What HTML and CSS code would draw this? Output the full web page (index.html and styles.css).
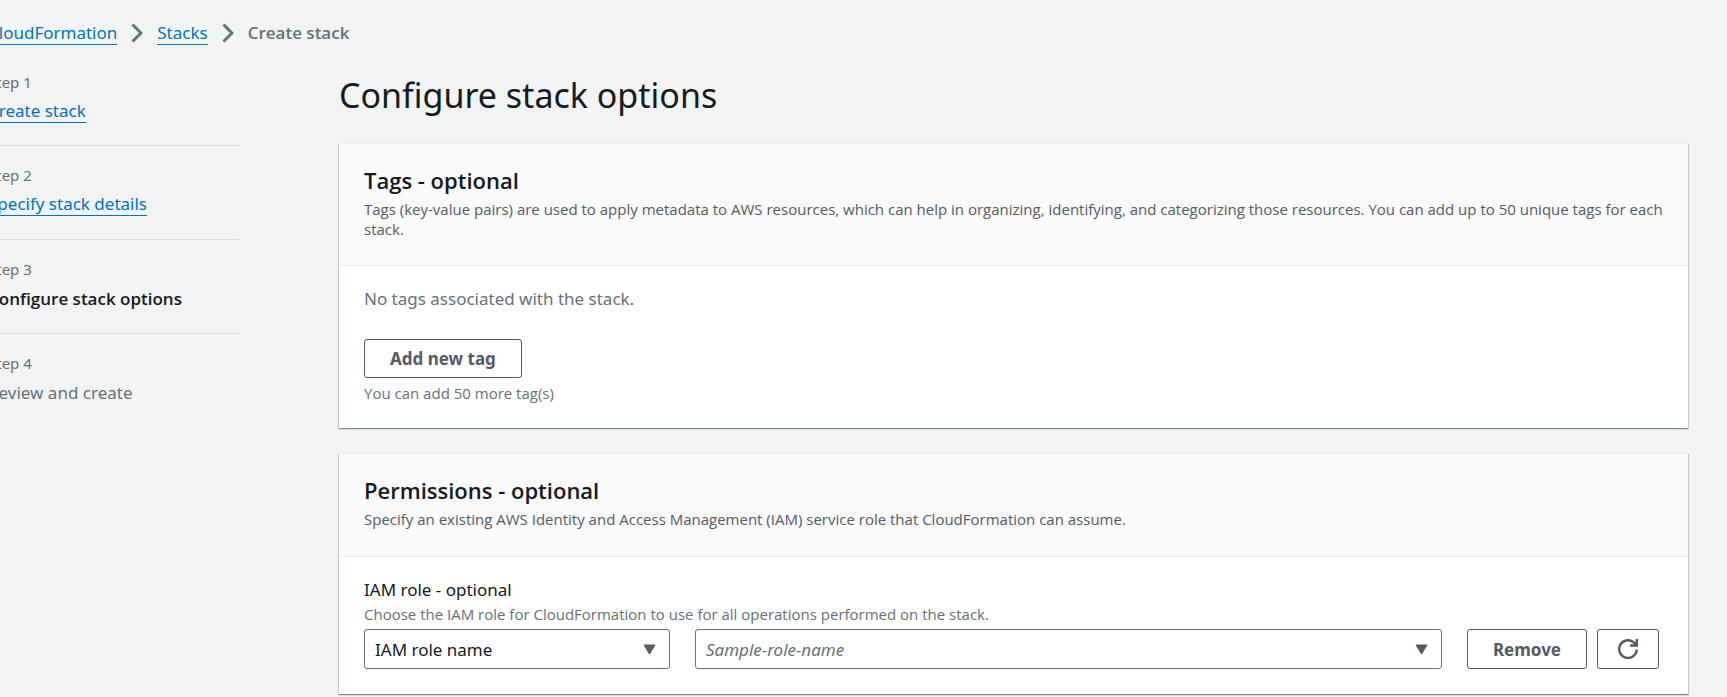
FILE: index.html
```html
<!DOCTYPE html>
<html lang="en">
<head>
<meta charset="utf-8">
<meta name="viewport" content="width=device-width, initial-scale=1">
<title>Create stack</title>
<link rel="stylesheet" href="styles.css">
</head>
<body>
<div class="page">
  <nav class="breadcrumbs" aria-label="Breadcrumbs">
    <a class="link" href="#cloudformation">CloudFormation</a>
    <svg class="chevron" viewBox="0 0 12 20" aria-hidden="true"><path d="M1.5 1.5 10 10l-8.5 8.5"/></svg>
    <a class="link" href="#stacks">Stacks</a>
    <svg class="chevron" viewBox="0 0 12 20" aria-hidden="true"><path d="M1.5 1.5 10 10l-8.5 8.5"/></svg>
    <span class="current">Create stack</span>
  </nav>
  <div class="layout">
    <ol class="steps">
      <li class="step"><span class="step-label">Step 1</span><a class="link" href="#create">Create stack</a></li>
      <li class="step"><span class="step-label">Step 2</span><a class="link" href="#details">Specify stack details</a></li>
      <li class="step"><span class="step-label">Step 3</span><span class="step-active" aria-current="step">Configure stack options</span></li>
      <li class="step"><span class="step-label">Step 4</span><span class="step-next">Review and create</span></li>
    </ol>
    <main class="content">
      <h1 class="title">Configure stack options</h1>
      <section class="card">
        <header class="card-header">
          <h2 class="card-title">Tags - optional</h2>
          <p class="card-text">Tags (key-value pairs) are used to apply metadata to AWS resources, which can help in organizing, identifying, and categorizing those resources. You can add up to 50 unique tags for each stack.</p>
        </header>
        <div class="card-body">
          <p class="empty">No tags associated with the stack.</p>
          <button class="button" type="button">Add new tag</button>
          <p class="hint">You can add 50 more tag(s)</p>
        </div>
      </section>
      <section class="card">
        <header class="card-header">
          <h2 class="card-title">Permissions - optional</h2>
          <p class="card-text">Specify an existing AWS Identity and Access Management (IAM) service role that CloudFormation can assume.</p>
        </header>
        <div class="card-body">
          <label class="field-label" for="role-kind">IAM role - optional</label>
          <p class="field-hint" id="role-hint">Choose the IAM role for CloudFormation to use for all operations performed on the stack.</p>
          <div class="role-row">
            <div class="select-wrap kind">
              <select class="select" id="role-kind" aria-describedby="role-hint"><option>IAM role name</option></select>
              <svg class="caret" viewBox="0 0 13 11" aria-hidden="true"><path d="M1 1h11L6.5 10z"/></svg>
            </div>
            <div class="select-wrap name">
              <select class="select placeholder" aria-label="Role name"><option>Sample-role-name</option></select>
              <svg class="caret" viewBox="0 0 13 11" aria-hidden="true"><path d="M1 1h11L6.5 10z"/></svg>
            </div>
            <div class="actions">
              <button class="button" type="button">Remove</button>
              <button class="button icon-button" type="button" aria-label="Refresh">
                <svg class="refresh" viewBox="0 0 20 20" aria-hidden="true"><path d="M18.8 10.5A8.8 8.8 0 1 1 15.5 3.2L18.5 6M18.8 0v6.5h-6.800"/></svg>
              </button>
            </div>
          </div>
        </div>
      </section>
    </main>
  </div>
</div>
</body>
</html>
```
FILE: styles.css
```css
* { box-sizing: border-box; }
body {
  margin: 0;
  background: #f2f3f3;
  color: #16191f;
  font: 17px/25px "Noto Sans", "Open Sans", sans-serif;
  overflow-x: hidden;
}
h1, h2, p, ol { margin: 0; padding: 0; }
.page { margin-left: -12px; padding: 20px 39px 0 0; }
.breadcrumbs { display: flex; align-items: center; gap: 14px; }
.link { color: #0073bb; text-decoration: none; border-bottom: 1px solid #0073bb; line-height: 23px; }
.chevron { width: 12px; height: 20px; fill: none; stroke: #687078; stroke-width: 3; }
.current { color: #687078; font-family: "Open Sans", sans-serif; font-weight: 600; }
.layout { display: flex; gap: 100px; margin-top: 25px; }
.steps { flex: 0 0 251px; list-style: none; }
.step { display: flex; flex-direction: column; align-items: flex-start; height: 94px; padding-top: 17px; border-bottom: 1px solid #d5dbdb; }
.step:first-child { height: 76px; padding-top: 0; }
.step:last-child { border-bottom: 0; }
.step-label { color: #687078; font-size: 15px; margin-bottom: 4px; }
.step-active { font-family: "Open Sans", sans-serif; font-weight: 600; }
.step-next { color: #687078; }
.content { flex: 1; min-width: 0; }
.title { font-size: 34px; line-height: 50px; font-weight: 400; margin-bottom: 23px; }
.card {
  background: #fff;
  border-top: 1px solid #eaeded;
  box-shadow: 0 1px 1px 0 rgba(0, 28, 36, .3), 1px 1px 1px 0 rgba(0, 28, 36, .15), -1px 1px 1px 0 rgba(0, 28, 36, .15);
  margin-bottom: 25px;
}
.card-header { min-height: 103px; background: #fafafa; border-bottom: 1px solid #eaeded; padding: 22px 25px 26px; }
.card-title { font-family: "Open Sans", sans-serif; font-size: 22px; line-height: 28px; font-weight: 600; }
.card-text { color: #545b64; font: 15px/20px "Open Sans", sans-serif; padding-top: 5px; }
.card-body { padding: 20px 25px 25px; }
.empty { margin-bottom: 28px; color: #687078; }
.button {
  min-height: 39px;
  padding: 0 25px;
  background: #fff;
  border: 1px solid #545b64;
  border-radius: 3px;
  color: #545b64;
  font: inherit;
  font-weight: 700;
}
.hint, .field-hint { color: #687078; font: 15px/20px "Open Sans", sans-serif; }
.hint { margin-top: 5px; }
.field-label { display: block; }
.field-hint { margin: 2px 0 5px; }
.role-row { display: flex; gap: 25px; padding-right: 4px; }
.select-wrap { position: relative; }
.kind { flex: 0 1 306px; }
.name { flex: 1; }
.select {
  appearance: none;
  display: block;
  width: 100%;
  height: 40px;
  padding: 0 38px 0 10px;
  background: #fff;
  border: 1px solid #687078;
  border-radius: 3px;
  color: #16191f;
  font: inherit;
}
.placeholder { color: #687078; font-style: italic; }
.caret { position: absolute; right: 14px; top: 15px; width: 13px; height: 11px; fill: #545b64; stroke: #545b64; stroke-width: 1; stroke-linejoin: round; pointer-events: none; }
.actions { display: flex; gap: 10px; }
.icon-button { display: flex; align-items: center; justify-content: center; padding: 0 20px; }
.refresh { width: 20px; height: 20px; fill: none; stroke: #545b64; stroke-width: 2.4; }
```
